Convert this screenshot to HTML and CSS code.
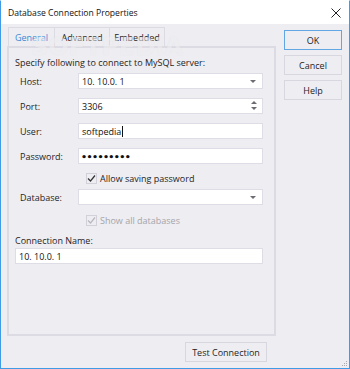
FILE: index.html
```html
<!DOCTYPE html>
<html lang="en">
  <head>
    <meta charset="utf-8" />
    <title>Database Connection Properties</title>
    <link rel="stylesheet" href="styles.css">
  </head>
  <body>
    <div class="window">
      <!--Title bar-->
      <div class="titlebar">
        <span class="title">Database Connection Properties</span>
        <svg class="close" width="10" height="10" viewBox="0 0 10 10">
          <path d="M0.5 0.5L9.5 9.5M9.5 0.5L0.5 9.5" stroke="#222" stroke-width="1" fill="none"></path>
        </svg>
      </div>

      <div class="dialog">
        <!--Left side: tabs and page-->
        <div class="main">
          <div class="tabs">
            <div class="tab tab-active">General</div>
            <div class="tab">Advanced</div>
            <div class="tab">Embedded</div>
          </div>
          <div class="page">
            <p class="intro">Specify following to connect to MySQL server:</p>

            <div class="row first">
              <label class="label">Host:</label>
              <div class="field combo">10. 10.0. 1<span class="arrow"></span></div>
            </div>
            <div class="row">
              <label class="label">Port:</label>
              <div class="field spin">3306
                <span class="spin-btns"><span class="up"></span><span class="down"></span></span>
              </div>
            </div>
            <div class="row">
              <label class="label">User:</label>
              <div class="field">softpedia<span class="caret"></span></div>
            </div>
            <div class="row">
              <label class="label">Password:</label>
              <div class="field password">•••••••••</div>
            </div>

            <div class="check-row allow">
              <span class="checkbox">
                <svg width="9" height="9" viewBox="0 0 9 9"><path d="M1 4.5L3.5 7L8 1.5" stroke="#333" stroke-width="1.2" fill="none"></path></svg>
              </span>
              <span>Allow saving password</span>
            </div>

            <div class="row db">
              <label class="label">Database:</label>
              <div class="field combo"><span class="arrow"></span></div>
            </div>

            <div class="check-row disabled">
              <span class="checkbox">
                <svg width="9" height="9" viewBox="0 0 9 9"><path d="M1 4.5L3.5 7L8 1.5" stroke="#b8b8be" stroke-width="1.2" fill="none"></path></svg>
              </span>
              <span>Show all databases</span>
            </div>

            <p class="conn-label">Connection Name:</p>
            <div class="field wide">10. 10.0. 1</div>
          </div>
          <div class="footer">
            <button class="btn test-btn" type="button">Test Connection</button>
          </div>
        </div>

        <!--Right side: dialog buttons-->
        <div class="side">
          <button class="btn btn-default" type="button">OK</button>
          <button class="btn" type="button">Cancel</button>
          <button class="btn" type="button">Help</button>
        </div>
      </div>

      <div class="watermark">SOFTPEDIA</div>
      <svg class="grip" width="7" height="7" viewBox="0 0 7 7">
        <rect x="5" y="1" width="1" height="1" fill="#a9a9b0"></rect>
        <rect x="3" y="3" width="1" height="1" fill="#a9a9b0"></rect>
        <rect x="5" y="3" width="1" height="1" fill="#a9a9b0"></rect>
        <rect x="1" y="5" width="1" height="1" fill="#a9a9b0"></rect>
        <rect x="3" y="5" width="1" height="1" fill="#a9a9b0"></rect>
        <rect x="5" y="5" width="1" height="1" fill="#a9a9b0"></rect>
      </svg>
    </div>
  </body>
</html>
```

FILE: styles.css
```css
* {
  box-sizing: border-box;
}
body {
  margin: 0;
  font-family: "Open Sans", "Noto Sans", sans-serif;
  font-size: 9px;
  color: #1e1e1e;
}
.window {
  position: relative;
  width: 350px;
  height: 369px;
  border: 1px solid #3f9be6;
  border-top-color: #ffffff;
  background-color: #eeedf2;
  overflow: hidden;
}
.titlebar {
  height: 23px;
  background-color: #ffffff;
  display: flex;
  align-items: center;
  justify-content: space-between;
  padding: 0 7px 0 7px;
}
.title {
  font-size: 8.6px;
  color: #111;
}
.close {
  margin-right: 1px;
}
.dialog {
  display: flex;
  padding-left: 6px;
}
.main {
  width: 269px;
  margin-top: 3px;
}
.tabs {
  display: flex;
  height: 19px;
  margin-left: 1px;
}
.tab {
  width: 55px;
  border: 1px solid #dcdbe3;
  border-bottom: none;
  border-left: none;
  display: flex;
  align-items: center;
  justify-content: center;
  color: #222;
}
.tab-active {
  width: 47px;
  border-left: 1px solid #dcdbe3;
  color: #3a8ad6;
}
.page {
  height: 290px;
  border: 2px solid #dcdbe3;
  padding: 8px 0 0 6px;
}
.intro {
  margin: 0;
  line-height: 14px;
}
.row {
  display: flex;
  align-items: center;
  margin-top: 9px;
}
.row.first {
  margin-top: 3px;
}
.row.db {
  margin-top: 4px;
}
.label {
  width: 63px;
  padding-left: 5px;
}
.field {
  position: relative;
  width: 185px;
  height: 16px;
  background-color: #ffffff;
  border: 1px solid #dedde6;
  display: flex;
  align-items: center;
  padding-left: 3px;
  color: #111;
}
.field.wide {
  width: 248px;
  margin-top: 0;
}
.password {
  font-family: "DejaVu Sans", sans-serif;
  font-size: 9.5px;
  font-weight: 700;
  letter-spacing: -0.6px;
  padding-left: 2px;
}
.caret {
  width: 1px;
  height: 11px;
  background-color: #111;
  margin-left: 1px;
}
.arrow {
  position: absolute;
  right: 6px;
  top: 6px;
  border-left: 3px solid transparent;
  border-right: 3px solid transparent;
  border-top: 3px solid #6c6c72;
}
.spin-btns {
  position: absolute;
  right: 5px;
  top: 2px;
  display: flex;
  flex-direction: column;
  gap: 3px;
}
.spin-btns .up {
  border-left: 3px solid transparent;
  border-right: 3px solid transparent;
  border-bottom: 3px solid #6c6c72;
}
.spin-btns .down {
  border-left: 3px solid transparent;
  border-right: 3px solid transparent;
  border-top: 3px solid #6c6c72;
}
.check-row {
  display: flex;
  align-items: center;
  height: 14px;
  padding-left: 71px;
  gap: 3px;
}
.check-row.allow {
  margin-top: 7px;
}
.check-row.disabled {
  margin-top: 8px;
  color: #a5a5ab;
}
.checkbox {
  width: 11px;
  height: 11px;
  border: 1px solid #d2d1d9;
  background-color: #eeedf2;
  display: flex;
  align-items: center;
  justify-content: center;
}
.conn-label {
  margin: 7px 0 0 0;
  line-height: 14px;
}
.footer {
  display: flex;
  justify-content: flex-end;
  padding-right: 9px;
  margin-top: 6px;
}
.btn {
  font-family: "Open Sans", "Noto Sans", sans-serif;
  font-size: 9px;
  color: #1e1e1e;
  background-color: #eeedf2;
  border: 1px solid #d8d7df;
  height: 20px;
  padding: 0;
  width: 58px;
}
.test-btn {
  width: 82px;
}
.btn-default {
  border-color: #62a6e4;
}
.side {
  display: flex;
  flex-direction: column;
  gap: 5px;
  margin-left: 8px;
  margin-top: 6px;
}
.watermark {
  position: absolute;
  left: 30px;
  top: 32px;
  font-family: "DejaVu Sans", sans-serif;
  font-size: 24px;
  font-weight: 700;
  color: rgba(255, 255, 255, 0.45);
  text-shadow: 0 0 1px rgba(190, 190, 198, 0.3);
  pointer-events: none;
}
.grip {
  position: absolute;
  right: 1px;
  bottom: 1px;
}
```
